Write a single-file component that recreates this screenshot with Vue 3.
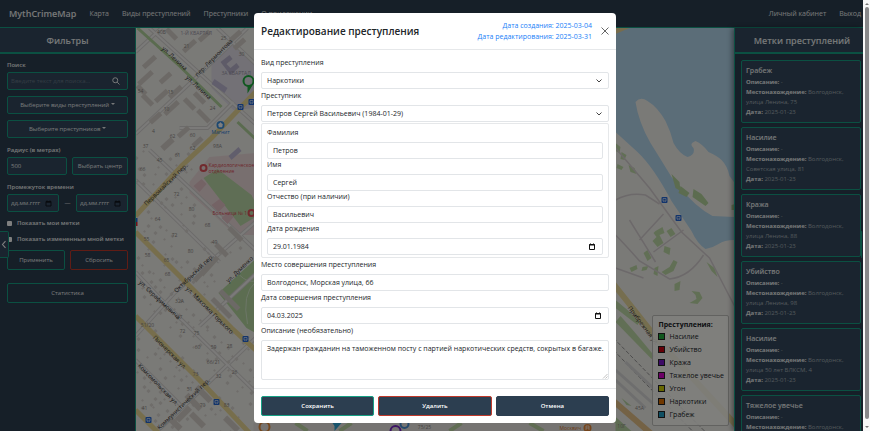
<script setup>
import { ref } from 'vue'

const navLinks = ['Карта', 'Виды преступлений', 'Преступники', 'О приложении']
const userLinks = ['Личный кабинет', 'Выход']

const marks = [
  { type: 'Грабеж', place: 'Волгодонск, улица Ленина, 75' },
  { type: 'Насилие', place: 'Волгодонск, Советская улица, 81' },
  { type: 'Кража', place: 'Волгодонск, улица Ленина, 88' },
  { type: 'Убийство', place: 'Волгодонск, улица Ленина, 98' },
  { type: 'Насилие', place: 'Волгодонск, улица 50 лет ВЛКСМ, 4' },
  { type: 'Тяжелое увечье', place: 'Волгодонск, улица Ленина, 70' }
]

const legend = [
  { name: 'Насилие', color: '#1fae3c' },
  { name: 'Убийство', color: '#c9000c' },
  { name: 'Кража', color: '#7a16cc' },
  { name: 'Тяжелое увечье', color: '#d800cc' },
  { name: 'Угон', color: '#cfcf00' },
  { name: 'Наркотики', color: '#e07000' },
  { name: 'Грабеж', color: '#1f9fc4' }
]

const form = ref({
  kind: 'Наркотики',
  criminal: 'Петров Сергей Васильевич (1984-01-29)',
  place: 'Волгодонск, Морская улица, 66',
  date: '04.03.2025',
  text: 'Задержан гражданин на таможенном посту с партией наркотических средств, сокрытых в багаже.'
})
const person = ref([
  { id: 'surname', label: 'Фамилия', value: 'Петров' },
  { id: 'name', label: 'Имя', value: 'Сергей' },
  { id: 'patronymic', label: 'Отчество (при наличии)', value: 'Васильевич' }
])
const birth = ref('29.01.1984')
const radius = ref('500')

// Small houses laid in rows along the diagonal streets
const houses = []
for (let i = 0; i < 32; i++) {
  for (let j = 0; j < 44; j++) {
    const h = (i * 73 + j * 151 + i * j * 17) % 97
    if (h < 42 || i % 5 === 0) continue
    const u = i * 8 - 120 + (h % 4)
    const v = j * 8 - 190 + (h % 5)
    const x = 190 + (u + v) * 0.7
    const y = 300 + (v - u) * 0.7
    if (x < 136 || x > 256 || y < 150 || y > 431) continue
    if (x > 195 && y < 240) continue
    if (x > 217 && y > 255 && y < 330) continue
    houses.push({ x: Math.round(x), y: Math.round(y), s: 2 + (h % 2) })
  }
}

// Apartment blocks: x, y, length, width, angle
const blocks = [
  [150, 62, 16, 5, -42], [146, 78, 18, 5, -42], [162, 96, 16, 5, -42], [172, 34, 14, 5, 45],
  [190, 46, 16, 5, -42], [205, 36, 14, 5, -42], [236, 36, 14, 5, -42], [240, 44, 14, 5, -42],
  [148, 100, 14, 5, 45], [166, 78, 14, 5, -42], [176, 92, 16, 5, -42], [200, 98, 14, 5, 45],
  [156, 118, 14, 5, -42], [190, 104, 14, 5, 45], [204, 116, 16, 5, 45], [172, 108, 18, 5, -42],
  [168, 144, 14, 6, -42], [184, 132, 14, 5, -42], [198, 142, 12, 5, -42], [142, 90, 12, 5, 45],
  [210, 266, 24, 5, -48], [203, 272, 24, 5, -48], [222, 250, 16, 5, 45], [236, 234, 18, 5, 45],
  [222, 308, 26, 5, 45], [230, 300, 26, 5, 45], [194, 402, 20, 6, 45], [204, 394, 20, 6, 45],
  [184, 414, 18, 6, -45], [198, 420, 18, 6, 45], [232, 424, 18, 6, 45], [176, 424, 14, 6, 45]
]

const numbers = [
  ['40Б', 162, 34], ['21', 187, 48], ['25', 224, 40], ['30', 242, 56], ['15', 171, 94],
  ['24', 213, 110], ['54', 141, 93], ['10', 167, 111], ['4', 154, 133], ['62', 173, 138],
  ['60', 193, 137], ['62', 193, 150], ['98А', 218, 148], ['37', 146, 148], ['45', 160, 162],
  ['61', 178, 157], ['66', 143, 171], ['72', 177, 196], ['80', 192, 211], ['64', 158, 221],
  ['68', 208, 227], ['72', 175, 237], ['80', 191, 253], ['49', 215, 244], ['55', 147, 241],
  ['58', 148, 257], ['65', 167, 262], ['68', 168, 276], ['32А', 180, 303], ['67', 180, 319],
  ['51/20', 148, 327], ['72', 183, 333], ['75', 197, 335], ['60', 198, 349], ['59', 214, 349],
  ['28', 230, 348], ['66/21', 214, 364], ['73', 196, 376], ['32', 219, 378], ['26', 235, 374],
  ['51', 190, 391], ['41', 145, 410], ['70', 203, 407], ['83', 227, 407], ['45А', 640, 410],
  ['10Г', 622, 428], ['75/25', 425, 429]
]

const streets = [
  ['ул. Ленина', 162, 49, 43], ['ул. Ленина', 186, 78, 43], ['пер. Лермонтова', 198, 77, -45],
  ['Первомайский пер.', 147, 206, -44], ['Октябрьский пер.', 177, 293, -44],
  ['ул. Максима Горького', 186, 289, 45], ['ул. Серафимовича', 139, 283, 43],
  ['ул. Думенко', 229, 283, -44], ['Пионерская ул.', 153, 338, 45],
  ['Комсомольская ул.', 138, 366, 46], ['Коммунистический пер.', 160, 430, -44],
  ['Прибрежная ул.', 628, 308, 53]
]

const stops = [[241, 107], [252, 102], [246, 339], [217, 402], [149, 420], [665, 200], [679, 218]]

const bushes = [
  'M616 143l5 4-1 6-4-2z', 'M622 152l5 3-2 5-4-1z', 'M618 164l6 3-2 3-5-2z', 'M629 165l6 3 2 6-6-2z',
  'M656 231l7-4 2 6-5 2 4 8-6 4-5-6 4-4-3-4z', 'M667 231l5-3 4 6-5 3z', 'M644 253l4-3 4 8-4 3z',
  'M665 246l6 2-1 7-6-3z', 'M630 268l7-3 1 4-6 3z', 'M643 267l6-1-2 4-5 1z', 'M655 268l4-2-1 10-4-2z',
  'M662 272l8-5 4-7 4 2-4 9-8 4z', 'M675 284l6-3-1 9-5 1z', 'M692 291l8 1 3 6-5 6-8-1 7-4-1-4z',
  'M707 262l8 6 3 9-6-6z', 'M616 300l12 10 12 12-2 3-22-17z', 'M621 316l14 16 20 24-3 3-36-37z'
]
</script>

<template>
  <div class="page">
    <div class="app">
      <header class="navbar">
        <a class="brand" href="#">MythCrimeMap</a>
        <nav class="links">
          <a v-for="l in navLinks" :key="l" href="#">{{ l }}</a>
        </nav>
        <nav class="links user">
          <a v-for="l in userLinks" :key="l" href="#">{{ l }}</a>
        </nav>
      </header>

      <div class="content">
        <aside class="side filters">
          <h2>Фильтры</h2>
          <form class="filter-form" @submit.prevent>
            <div class="group">
              <label for="search">Поиск</label>
              <div class="field">
                <input id="search" type="text" placeholder="Введите текст для поиска..." />
                <svg class="lens" viewBox="0 0 16 16"><circle cx="6.5" cy="6.5" r="5" /><path d="M10.3 10.3l4.7 4.7" /></svg>
              </div>
            </div>
            <button type="button" class="dark-btn">Выберите виды преступлений <i class="caret"></i></button>
            <button type="button" class="dark-btn">Выберите преступников <i class="caret"></i></button>
            <div class="group">
              <label for="radius">Радиус (в метрах)</label>
              <div class="row">
                <div class="field"><input id="radius" v-model="radius" type="text" /></div>
                <button type="button" class="dark-btn center-btn">Выбрать центр</button>
              </div>
            </div>
            <div class="group">
              <label for="from">Промежуток времени</label>
              <div class="row">
                <div class="field">
                  <input id="from" class="date" type="text" placeholder="дд.мм.гггг" />
                  <svg class="cal" viewBox="0 0 14 14"><path d="M2 3h10v9H2zM2 4.5h10M4 1v2M10 1v2" /></svg>
                </div>
                <span class="dash">—</span>
                <div class="field">
                  <input class="date" type="text" placeholder="дд.мм.гггг" aria-label="По" />
                  <svg class="cal" viewBox="0 0 14 14"><path d="M2 3h10v9H2zM2 4.5h10M4 1v2M10 1v2" /></svg>
                </div>
              </div>
            </div>
            <label class="check"><input type="checkbox" />Показать мои метки</label>
            <label class="check"><input type="checkbox" />Показать измененные мной метки</label>
            <div class="row actions">
              <button type="submit" class="dark-btn">Применить</button>
              <button type="reset" class="dark-btn danger">Сбросить</button>
            </div>
            <button type="button" class="dark-btn stats">Статистика</button>
          </form>
          <button type="button" class="toggle" aria-label="Свернуть">
            <svg viewBox="0 0 8 12"><path d="M6 1.5L2 6l4 4.500" /></svg>
          </button>
        </aside>

        <main class="map">
          <svg class="tiles" viewBox="136 28 599 403" preserveAspectRatio="xMidYMid slice">
            <rect x="136" y="28" width="599" height="403" fill="#f5f4ef" />
            <path d="M212 60L232 44l24 18v46l-22 2-22-22z" fill="#e6e2ec" />
            <path d="M190 182l20-25 46-4v82l-20 0-46-42z" fill="#f1dfdf" />
            <path d="M204 178l14-9 34 26 4 8v14l-15 9z" fill="#bfdcaa" />
            <path d="M219 293l37-34v74l-9-5z" fill="#b8dba2" />
            <path d="M256 282q-14 12-8 42M240 275q8 8 16 6" fill="none" stroke="#d9ecce" />

            <g fill="none" stroke="#d9d7d5" stroke-width="4">
              <path d="M248 28L196 78 136 134M136 180L220 262M150 150l106 100M136 336L175 293 256 222M136 272L168 306 256 392M136 360l48 48M158 431L190 401 256 338M200 326l56-52M150 28l106 96M136 52l26-24M180 128h28l26-26M218 28l38 36" />
            </g>
            <g fill="none" stroke="#f6f5f2" stroke-width="2">
              <path d="M248 28L196 78 136 134M136 180L220 262M150 150l106 100M136 336L175 293 256 222M136 272L168 306 256 392M136 360l48 48M158 431L190 401 256 338M200 326l56-52M150 28l106 96M136 52l26-24M180 128h28l26-26M218 28l38 36" />
            </g>
            <path d="M138 28L180 66 222 107M238 122l18 17" stroke="#b4d79e" stroke-width="3" fill="none" />

            <rect v-for="(h, i) in houses" :key="'h' + i" :x="h.x" :y="h.y" :width="h.s" :height="h.s" fill="#dedad5" :transform="`rotate(45 ${h.x} ${h.y})`" />
            <rect v-for="(b, i) in blocks" :key="'b' + i" :x="b[0] - b[2] / 2" :y="b[1] - b[3] / 2" :width="b[2]" :height="b[3]" fill="#d9d3cc" :transform="`rotate(${b[4]} ${b[0]} ${b[1]})`" />
            <path d="M221 62l9-7 3 4-6 5 4 4 6-5 3 4-9 8z" fill="#bdb7d0" />
            <path d="M215 79l13 9-3 5-13-9zM229 156l10-9 3 4-10 9z" fill="#c3bdd8" />
            <path d="M194 186l8-7 5 5-7 8zM212 205l8-6 6 6-7 7zM222 218l7-6 5 5-6 7z" fill="#e8c6cb" />

            <g fill="none" stroke="#efdc98" stroke-width="5">
              <path d="M136 216L182 166 212 138 256 92M136 232L182 278 232 328 256 350M136 316L200 380 250 433M136 410l24 24" />
            </g>

            <path d="M616 28h119v212q-10 0-16 4t-13 5q-8-5-14-18l-20-30q-18-34-34-49l-22-20z" fill="#b6daf0" />
            <path d="M636 102q5-6 12-1 10 6 18 20 5 10 8 22 6 11 14 14 8-2 6-9-5-4 2-7 7 3 13 11 9 4 13 8 6 6 8 16l5 7v34l-22-1q-17-9-33-29l-8-10q-11-18-21-34-12-21-15-41z" fill="#f5f4ef" />
            <path d="M672 174l8 8 1 9-5-3zM681 186l9 7-3 4-8-4zM694 189l8 5 7 9-3 3-13-9zM732 205l3-1v6h-3z" fill="#b8d99f" />
            <path v-for="(b, i) in bushes" :key="'g' + i" :d="b" fill="#c3dfab" />
            <g fill="none" stroke="#d9d2d4" stroke-width="1.500">
              <path d="M616 148l12 14 22 26 16 22 16 22 28 26 25 48M616 200q14-8 30-5l14 9M616 235q10 10 24 26l30 18q20-2 34-24M630 220l26 42M616 268l28 10M640 240l24-26M654 252l30-22" />
            </g>
            <path d="M614 284L660 342 730 418l12 13" fill="none" stroke="#eddd9e" stroke-width="6" />
            <g fill="none" stroke="#999" stroke-dasharray="4 2"><path d="M614 338l70 72 22 22M614 350l46 48 34 34" /></g>
            <g fill="none" stroke="#ddd" stroke-width="3"><path d="M616 370l38 34M616 380l30 28M626 362l34 32" /></g>
            <path d="M614 401l38 33" stroke="#e9c48a" stroke-width="6" />
            <path d="M614 415l20 18h-20zM622 398l10 8-5-1z" fill="#bcd9a7" />
            <path d="M616 28h14l-14 6z" fill="#eed999" />
            <path d="M254 423h362v8H254z" fill="#ece9e4" />
            <path d="M296 423l12 8M340 431l12-8M450 431l12-8M530 423l14 8" stroke="#c2dba8" stroke-width="4" />

            <g class="num"><text v-for="(n, i) in numbers" :key="'n' + i" :x="n[1]" :y="n[2]">{{ n[0] }}</text></g>
            <g class="street"><text v-for="(s, i) in streets" :key="'s' + i" :transform="`translate(${s[1]} ${s[2]}) rotate(${s[3]})`">{{ s[0] }}</text></g>
            <text class="quarter" x="181" y="35">1-Й КВАРТАЛ</text>
            <text class="quarter" x="222" y="75">3А КВАРТАЛ</text>

            <g v-for="(s, i) in stops" :key="'t' + i" :transform="`translate(${s[0]} ${s[1]})`">
              <rect x="-3" y="-3" width="6" height="6" rx="1" fill="#2468d8" />
              <path d="M-1.500 -1.500h3v2.500h-3zM-1 1.500h.6M.5 1.500h.6" stroke="#fff" fill="none" stroke-width=".6" />
            </g>
            <path d="M136 218h2v4h-2z" fill="#2468d8" /><path d="M136 222h2v4h-2z" fill="#e02030" />
            <g fill="none" stroke="#e3555c" stroke-width="2">
              <circle cx="204" cy="168" r="3" /><circle cx="252" cy="213" r="3" />
            </g>
            <text class="poi red" x="209" y="167">Кардиологическое</text>
            <text class="poi red" x="209" y="173">отделение</text>
            <text class="poi red" x="213" y="215">Больница № 1</text>
            <circle cx="221" cy="125" r="4" fill="#3a90e0" />
            <path d="M219 124h4l-.5 3h-3zM219.800 124q1.200-3 2.400 0" fill="#fff" stroke="#fff" stroke-width=".5" />
            <text class="poi blue" x="212" y="134">Магнит</text>

            <g fill="none" stroke-width="2">
              <g stroke="#20b040"><circle cx="249" cy="81" r="5" /><path d="M249 85l0 5 3-5" /></g>
              <circle cx="265" cy="427" r="5" stroke="#e89040" />
              <circle cx="396" cy="431" r="5" stroke="#7a28c8" />
              <circle cx="405" cy="424" r="4" stroke="#4a90d8" />
            </g>
            <path d="M333 423h9l-7 8v-5z" fill="#30a8d8" />
            <text class="poi orange" x="560" y="430">Москвич</text>
            <circle cx="588" cy="428" r="4" fill="#e88838" />
            <path d="M586.500 430v-4h3v4M586.500 428h3" stroke="#fff" stroke-width=".7" fill="none" />
          </svg>
          <div class="legend">
            <strong>Преступления:</strong>
            <span v-for="l in legend" :key="l.name" class="legend-item">
              <i class="swatch" :style="{ background: l.color }"></i>{{ l.name }}
            </span>
          </div>
        </main>

        <aside class="side marks">
          <h2>Метки преступлений</h2>
          <div class="mark-list">
            <article v-for="(m, i) in marks" :key="i" class="mark">
              <h3>{{ m.type }}</h3>
              <p><b>Описание:</b> -</p>
              <p><b>Местонахождение:</b> {{ m.place }}</p>
              <p><b>Дата:</b> 2025-01-23</p>
            </article>
          </div>
          <button type="button" class="toggle right" aria-label="Свернуть метки"></button>
        </aside>
      </div>
      <div class="backdrop"></div>
    </div>

    <div class="scrollbar">
      <i class="arrow up"></i>
      <i class="thumb"></i>
      <i class="arrow down"></i>
    </div>

    <div class="modal-layer">
      <form class="modal" role="dialog" aria-labelledby="modal-title" @submit.prevent>
        <header class="modal-head">
          <h1 id="modal-title">Редактирование преступления</h1>
          <div class="stamps">
            <span>Дата создания: 2025-03-04</span>
            <span>Дата редактирования: 2025-03-31</span>
          </div>
          <button type="button" class="close" aria-label="Закрыть">
            <svg viewBox="0 0 8 8"><path d="M.5 .5l7 7M7.500 .5l-7 7" /></svg>
          </button>
        </header>

        <div class="modal-body">
          <div class="item">
            <label for="kind">Вид преступления</label>
            <div class="select">
              <select id="kind" v-model="form.kind"><option>Наркотики</option></select>
              <svg viewBox="0 0 8 8"><path d="M1.500 2.500L4 5l2.500-2.500" /></svg>
            </div>
          </div>
          <div class="item">
            <label for="criminal">Преступник</label>
            <div class="select">
              <select id="criminal" v-model="form.criminal"><option>Петров Сергей Васильевич (1984-01-29)</option></select>
              <svg viewBox="0 0 8 8"><path d="M1.500 2.500L4 5l2.500-2.500" /></svg>
            </div>
          </div>
          <div class="person">
            <div v-for="p in person" :key="p.id" class="item">
              <label :for="p.id">{{ p.label }}</label>
              <div class="control"><input :id="p.id" v-model="p.value" type="text" /></div>
            </div>
            <div class="item">
              <label for="birth">Дата рождения</label>
              <div class="control">
                <input id="birth" v-model="birth" type="text" />
                <svg class="calendar" viewBox="0 0 8 8"><path d="M1.500 1.500h5v5h-5z" /><path d="M1 2h6M2.500 .5v1M5.500 .5v1" /></svg>
              </div>
            </div>
          </div>
          <div class="item">
            <label for="place">Место совершения преступления</label>
            <div class="control"><input id="place" v-model="form.place" type="text" /></div>
          </div>
          <div class="item">
            <label for="date">Дата совершения преступления</label>
            <div class="control">
              <input id="date" v-model="form.date" type="text" />
              <svg class="calendar" viewBox="0 0 8 8"><path d="M1.500 1.500h5v5h-5z" /><path d="M1 2h6M2.500 .5v1M5.500 .5v1" /></svg>
            </div>
          </div>
          <div class="item">
            <label for="text">Описание (необязательно)</label>
            <div class="area">
              <textarea id="text" v-model="form.text"></textarea>
              <svg viewBox="0 0 6 6"><path d="M1 5.500L5.500 1M3.500 5.500l2-2" /></svg>
            </div>
          </div>
        </div>

        <footer class="modal-foot">
          <button type="submit" class="save">Сохранить</button>
          <button type="button" class="delete">Удалить</button>
          <button type="button">Отмена</button>
        </footer>
      </form>
    </div>
  </div>
</template>

<style>
body {
  overflow: hidden;
}
</style>

<style scoped>
.page,
.page * {
  box-sizing: border-box;
}
.page {
  display: flex;
  height: 100vh;
  font: 7px/12px "Open Sans", "Noto Sans", sans-serif;
  color: #212529;
}
button,
input,
select,
textarea {
  font: inherit;
  color: inherit;
  margin: 0;
  padding: 0;
  border: 0;
  background: none;
  min-width: 0;
  outline: none;
}
h1,
h2,
h3,
p {
  margin: 0;
}
svg {
  fill: none;
}
.app {
  position: relative;
  flex: 1;
  min-width: 0;
  display: flex;
  flex-direction: column;
  overflow: hidden;
  background: #2c3e50;
}
.backdrop {
  position: absolute;
  inset: 0;
  z-index: 3;
  background: rgba(0, 0, 0, 0.5);
}
.navbar {
  display: flex;
  align-items: center;
  height: 28px;
  padding: 0 2px 0 9px;
  border-bottom: 1px solid #16a085;
  color: #ecf0f1;
}
.navbar a {
  color: inherit;
  text-decoration: none;
  white-space: nowrap;
}
.brand {
  font-size: 9px;
  font-weight: 600;
  margin-right: 13px;
}
.links {
  display: flex;
  gap: 13px;
  font-weight: 500;
}
.user {
  margin-left: auto;
}
.content {
  flex: 1;
  min-height: 0;
  display: flex;
}
.side {
  position: relative;
  display: flex;
  flex-direction: column;
  font-size: 6px;
  color: #ecf0f1;
}
.side h2 {
  height: 26px;
  border-bottom: 2px solid #16a085;
  background: #34495e;
  font-size: 9px;
  line-height: 25px;
  font-weight: 600;
  text-align: center;
}
.filters {
  flex: 0 0 136px;
  border-right: 1px solid #16a085;
}
.filter-form {
  display: flex;
  flex-direction: column;
  gap: 6px;
  padding: 5px 7px;
}
.group {
  display: flex;
  flex-direction: column;
  gap: 1px;
}
.group label,
.check {
  font-weight: 600;
}
.check {
  line-height: 10px;
  display: flex;
  align-items: center;
  gap: 5px;
  white-space: nowrap;
}
.check input {
  appearance: none;
  width: 5px;
  height: 5px;
  background: #fff;
  border-radius: 1px;
}
.row {
  display: flex;
  gap: 5px;
}
.field {
  display: flex;
  min-width: 0;
  align-items: center;
  height: 18px;
  padding: 0 3px;
  border: 1px solid #16a085;
  border-radius: 2px;
  background: #34495e;
}
.row .field {
  flex: 1;
}
.field input {
  flex: 1;
  width: 100%;
}
.field input::placeholder {
  color: #68798a;
  opacity: 1;
}
.field .date::placeholder {
  color: #ecf0f1;
}
.lens {
  width: 8px;
  height: 8px;
  margin-right: 4px;
  stroke: #ecf0f1;
  stroke-width: 2;
}
.cal {
  width: 7px;
  height: 7px;
  flex: none;
  margin-right: 3px;
  stroke: #10171f;
  stroke-width: 2;
}
.dark-btn {
  height: 18px;
  border: 1px solid #16a085;
  border-radius: 2px;
  background: #34495e;
  white-space: nowrap;
}
.caret {
  display: inline-block;
  border: 2px solid transparent;
  border-top-color: currentColor;
  border-bottom: 0;
  vertical-align: 2px;
}
.center-btn {
  flex: 0 0 56px;
}
.dash {
  width: 7px;
  line-height: 18px;
  text-align: center;
}
.actions .dark-btn {
  flex: 1;
  height: 20px;
  background: #2c3e50;
}
.dark-btn.danger {
  border-color: #c0392b;
}
.dark-btn.stats {
  height: 20px;
  margin-top: 7px;
  background: #2c3e50;
}
.toggle {
  position: absolute;
  left: 0;
  top: 203px;
  width: 9px;
  height: 27px;
  border: 1px solid #16a085;
  border-left: 0;
  border-radius: 0 2px 2px 0;
  background: #34495e;
  display: flex;
  align-items: center;
  justify-content: center;
}
.toggle svg {
  width: 6px;
  height: 9px;
  stroke: #fff;
  stroke-width: 1.5;
}
.toggle.right {
  left: auto;
  right: 0;
  width: 2px;
  border: 0;
  border-left: 1px solid #16a085;
}
.map {
  position: relative;
  flex: 1;
  min-width: 0;
  overflow: hidden;
  background: #f5f4ef;
}
.tiles {
  display: block;
  width: 100%;
  height: 100%;
}
.num text {
  font-size: 5px;
  fill: #8c8884;
  text-anchor: middle;
}
.street text {
  font-size: 6px;
  fill: #333;
}
.quarter {
  font-size: 5px;
  fill: #9a96a8;
}
.poi {
  font-size: 5px;
}
.red {
  fill: #dc4a55;
}
.blue {
  fill: #2c80d8;
}
.orange {
  fill: #d87830;
}
.legend {
  position: absolute;
  right: 5px;
  bottom: 5px;
  display: flex;
  flex-direction: column;
  padding: 4px 4px 4px 5px;
  border: 1px solid #c4c4c0;
  border-radius: 2px;
  background: rgba(255, 255, 250, 0.85);
  white-space: nowrap;
}
.legend strong {
  line-height: 10px;
}
.legend-item {
  display: flex;
  align-items: center;
  gap: 4px;
  line-height: 13px;
}
.swatch {
  width: 7px;
  height: 7px;
  border: 1px solid #222;
}
.marks {
  flex: 0 0 129px;
  border-left: 1px solid #16a085;
  box-shadow: -2px 0 5px rgba(0, 0, 0, 0.4);
}
.marks h2 {
  padding-left: 6px;
}
.mark-list {
  flex: 1;
  min-height: 0;
  overflow: hidden;
  display: flex;
  flex-direction: column;
  gap: 4px;
  padding: 6px 2px 0 6px;
}
.mark {
  flex: none;
  padding: 4px 4px 5px;
  border: 1px solid #16a085;
  border-radius: 2px;
  background: #34495e;
  line-height: 10px;
  color: #a9b2ba;
}
.mark h3 {
  font-size: 7px;
  line-height: 12px;
  font-weight: 600;
  color: #ecf0f1;
}
.mark b {
  color: #ecf0f1;
}
.scrollbar {
  flex: 0 0 7px;
  display: flex;
  flex-direction: column;
  align-items: center;
  justify-content: space-between;
  padding: 3px 0;
  background: #f8f8f8;
}
.thumb {
  flex: 1;
  width: 4px;
  margin: 2px 0 7px;
  border-radius: 2px;
  background: #88888a;
}
.arrow {
  border: 2px solid transparent;
}
.up {
  border-top: 0;
  border-bottom-color: #777;
}
.down {
  border-bottom: 0;
  border-top-color: #777;
}
.modal-layer {
  position: fixed;
  inset: 0;
  z-index: 5;
  display: flex;
  align-items: flex-start;
  justify-content: center;
  padding-top: 13px;
}
.modal {
  width: 100%;
  max-width: 362px;
  border-radius: 4px;
  background: #fff;
}
.modal-head {
  display: flex;
  align-items: center;
  height: 37px;
  padding: 0 7px;
  border-bottom: 1px solid #e6e8ea;
}
.modal-head h1 {
  flex: 1;
  font-size: 10px;
  line-height: 16px;
  font-weight: 600;
}
.stamps {
  display: flex;
  flex-direction: column;
  text-align: right;
  line-height: 11px;
  color: #1a80f8;
}
.close {
  width: 8px;
  height: 8px;
  margin-left: 9px;
  display: flex;
}
.close svg {
  width: 8px;
  height: 8px;
  stroke: #666;
}
.modal-body {
  display: flex;
  flex-direction: column;
  gap: 1px;
  padding: 7px 7px 8px;
}
.item {
  display: flex;
  flex-direction: column;
  gap: 3px;
}
.person {
  padding: 3px 5px 2px;
  border: 1px solid #e6e8ea;
  border-radius: 2px;
}
.control,
.select,
.area {
  border: 1px solid #e2e5e8;
  border-radius: 2px;
  background: #fff;
}
.control {
  display: flex;
  align-items: center;
  height: 17px;
  padding: 0 5px;
}
.control input {
  flex: 1;
}
.calendar {
  width: 8px;
  height: 8px;
  margin-right: 1px;
  stroke: #111;
}
.select,
.area {
  display: grid;
}
.select {
  height: 17px;
  align-items: center;
}
.select > *,
.area > * {
  grid-area: 1 / 1;
}
.select select {
  appearance: none;
  width: 100%;
  height: 15px;
  padding: 0 5px;
}
.select svg {
  width: 8px;
  height: 8px;
  margin-right: 5px;
  justify-self: end;
  stroke: #444;
  pointer-events: none;
}
.area textarea {
  display: block;
  width: 100%;
  height: 38px;
  padding: 2px 0 2px 5px;
  resize: none;
  overflow: hidden;
}
.area svg {
  width: 6px;
  height: 6px;
  place-self: end;
  stroke: #999;
  stroke-width: 0.6;
  pointer-events: none;
}
.modal-foot {
  display: flex;
  gap: 4px;
  padding: 7px;
  border-top: 1px solid #e6e8ea;
}
.modal-foot button {
  flex: 1;
  height: 20px;
  border: 1px solid #2c3e50;
  border-radius: 2px;
  background: #2c3e50;
  color: #fff;
  font-size: 6px;
  font-weight: 600;
}
.modal-foot .save {
  border-color: #16a085;
}
.modal-foot .delete {
  border-color: #c0392b;
}
</style>
